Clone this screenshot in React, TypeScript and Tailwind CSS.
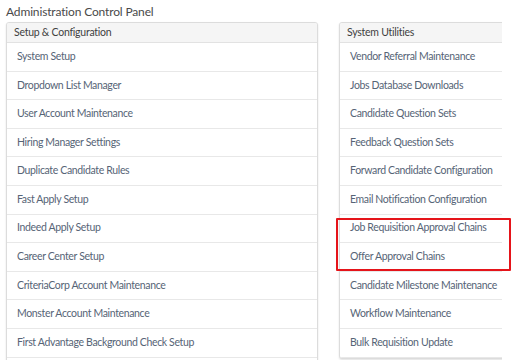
const setupItems = [
  'System Setup',
  'Dropdown List Manager',
  'User Account Maintenance',
  'Hiring Manager Settings',
  'Duplicate Candidate Rules',
  'Fast Apply Setup',
  'Indeed Apply Setup',
  'Career Center Setup',
  'CriteriaCorp Account Maintenance',
  'Monster Account Maintenance',
  'First Advantage Background Check Setup',
];

const utilityItems = [
  'Vendor Referral Maintenance',
  'Jobs Database Downloads',
  'Candidate Question Sets',
  'Feedback Question Sets',
  'Forward Candidate Configuration',
  'Email Notification Configuration',
  'Job Requisition Approval Chains',
  'Offer Approval Chains',
  'Candidate Milestone Maintenance',
  'Workflow Maintenance',
  'Bulk Requisition Update',
];

function Panel({ title, items, className }: { title: string; items: string[]; className: string }) {
  return (
    <section className={`self-start overflow-hidden rounded-[3px] border border-[#dcdcdc] bg-white shadow-[0_1px_2px_rgba(0,0,0,0.12)] ${className}`}>
      <div className="flex h-[20px] items-center border-b border-[#e2e2e2] bg-[#f5f5f5] px-[7px] text-[10.5px] tracking-[-0.25px] text-[#3f3f3f]">
        {title}
      </div>
      {items.map((item) => (
        <div
          key={item}
          className="flex h-[28.6px] items-center border-b border-[#e8e8e8] px-[10px] text-[10.5px] tracking-[-0.35px] whitespace-nowrap text-[#566476]"
        >
          {item}
        </div>
      ))}
    </section>
  );
}

export default function App() {
  return (
    <div className="relative h-[360px] w-[516px] overflow-hidden bg-white font-['Lato','Open_Sans',sans-serif]">
      <div className="w-[502px] overflow-hidden">
        <h1 className="px-[6px] pt-[3px] text-[12px] font-normal leading-[17px] tracking-[-0.15px] text-[#4a4a4a]">
          Administration Control Panel
        </h1>
        <div className="mt-[2px] flex gap-[21px] pl-[6px]">
          <Panel title="Setup & Configuration" items={setupItems} className="w-[312px] shrink-0 pb-[12px]" />
          <Panel title="System Utilities" items={utilityItems} className="w-[200px] shrink-0" />
        </div>
      </div>
      {/* highlight box */}
      <div className="absolute left-[336px] top-[218px] h-[53px] w-[175px] rounded-[1px] border-2 border-[#e5141a]" />
    </div>
  );
}
